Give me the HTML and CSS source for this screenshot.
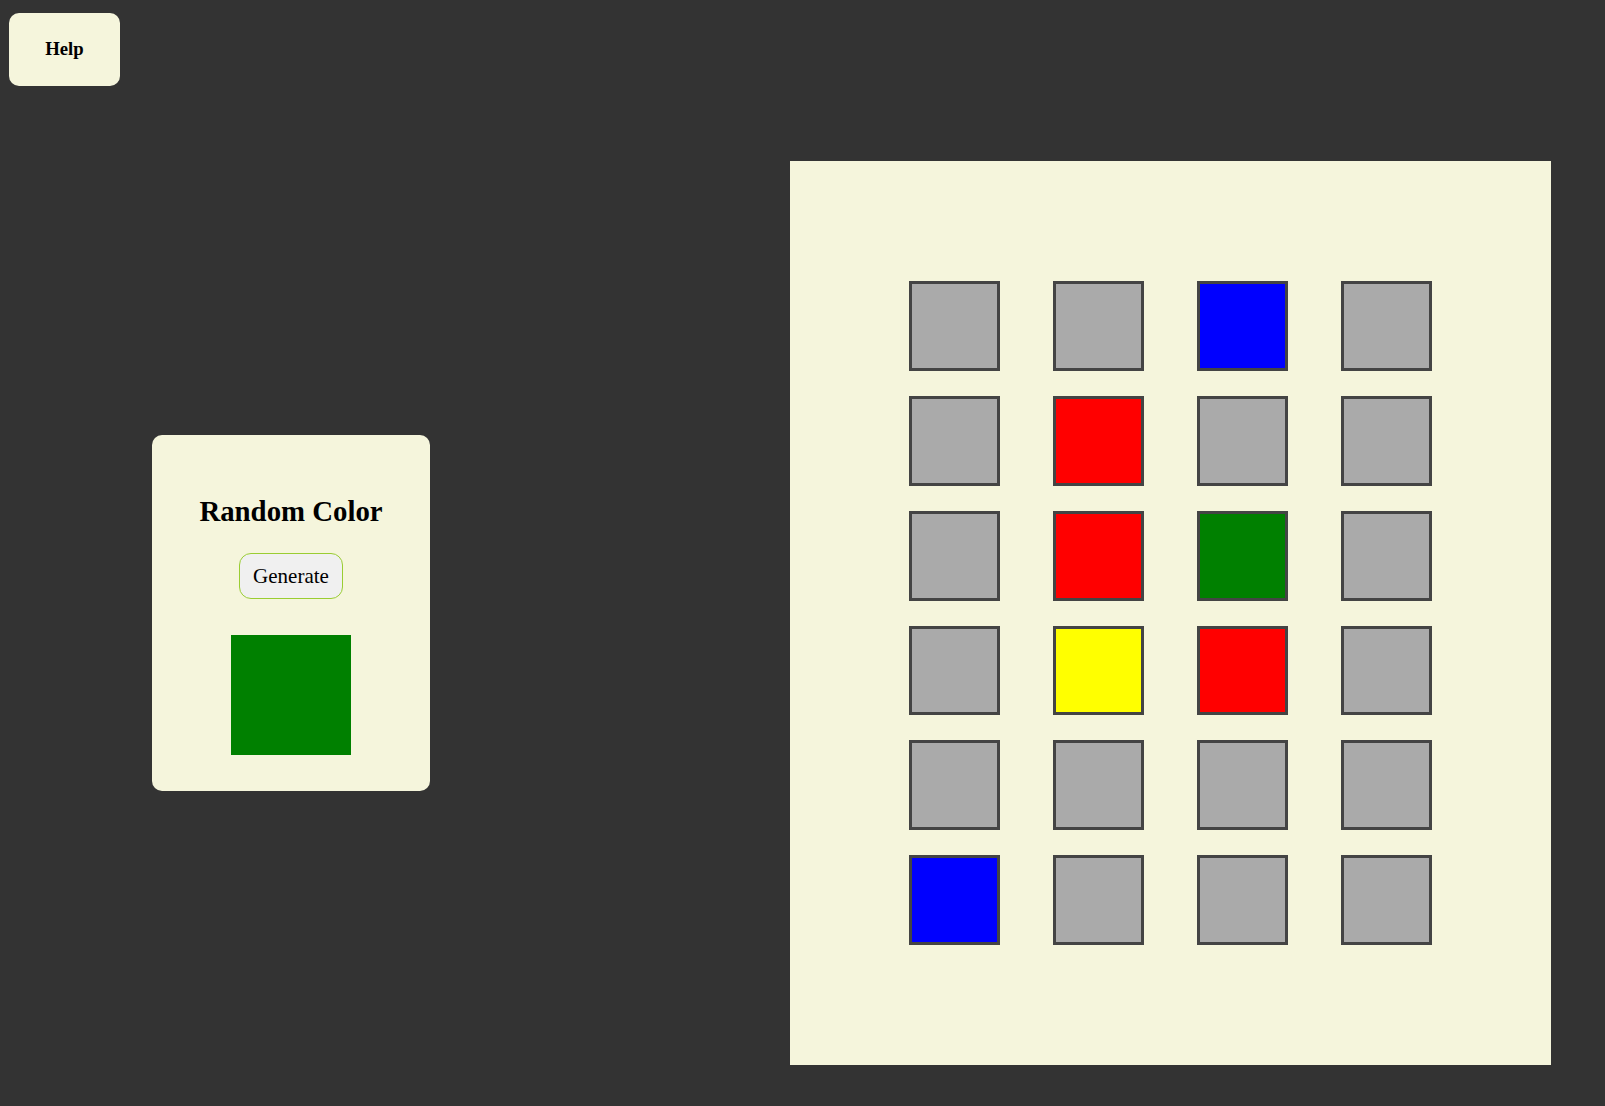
FILE: index.html
```html
<!DOCTYPE html>
<html lang="en">
<head>
<meta charset="utf-8">
<title>Random Color</title>
<link rel="stylesheet" href="styles.css">
</head>
<body>
<button class="help">Help</button>
<main class="main">
  <section class="card">
    <h2 class="title">Random Color</h2>
    <button class="generate">Generate</button>
    <div class="swatch"></div>
  </section>
  <section class="board">
    <div class="grid">
      <div class="cell"></div><div class="cell"></div><div class="cell blue"></div><div class="cell"></div>
      <div class="cell"></div><div class="cell red"></div><div class="cell"></div><div class="cell"></div>
      <div class="cell"></div><div class="cell red"></div><div class="cell green"></div><div class="cell"></div>
      <div class="cell"></div><div class="cell yellow"></div><div class="cell red"></div><div class="cell"></div>
      <div class="cell"></div><div class="cell"></div><div class="cell"></div><div class="cell"></div>
      <div class="cell blue"></div><div class="cell"></div><div class="cell"></div><div class="cell"></div>
    </div>
  </section>
</main>
</body>
</html>
```
FILE: styles.css
```css
html, body {
  margin: 0;
  padding: 0;
}
body {
  background: #333333;
  font-family: "Liberation Serif", "Times New Roman", serif;
  color: #000;
}
.help {
  display: block;
  margin: 13px 0 0 9px;
  width: 111px;
  height: 73px;
  padding: 0 0 2px;
  border: none;
  border-radius: 10px;
  background: #f5f5dc;
  font-family: "Liberation Serif", "Times New Roman", serif;
  font-weight: bold;
  font-size: 18.72px;
  color: #000;
}
.main {
  display: flex;
  align-items: center;
  gap: 360px;
  margin-top: 75px;
  padding-left: 152px;
}
.card {
  width: 278px;
  box-sizing: border-box;
  padding: 60px 0 36px;
  background: #f5f5dc;
  border-radius: 10px;
  display: flex;
  flex-direction: column;
  align-items: center;
}
.title {
  margin: 0 0 25px;
  font-size: 28.8px;
  font-weight: bold;
  line-height: normal;
}
.generate {
  margin: 0 0 36px;
  padding: 10px 13px;
  font-family: "Liberation Serif", "Times New Roman", serif;
  font-size: 21px;
  line-height: 24px;
  background: #f0f0f0;
  border: 1px solid #9acd32;
  border-radius: 12px;
  color: #000;
}
.swatch {
  width: 120px;
  height: 120px;
  background: #008000;
}
.board {
  width: 761px;
  height: 904px;
  background: #f5f5dc;
  display: flex;
  align-items: center;
  justify-content: center;
}
.grid {
  display: grid;
  grid-template-columns: repeat(4, 90.4px);
  grid-auto-rows: 89.8px;
  column-gap: 53.6px;
  row-gap: 25px;
}
.cell {
  box-sizing: border-box;
  border: 3px solid #444444;
  background: #aaaaaa;
}
.cell.blue { background: #0000ff; }
.cell.red { background: #ff0000; }
.cell.green { background: #008000; }
.cell.yellow { background: #ffff00; }
```
